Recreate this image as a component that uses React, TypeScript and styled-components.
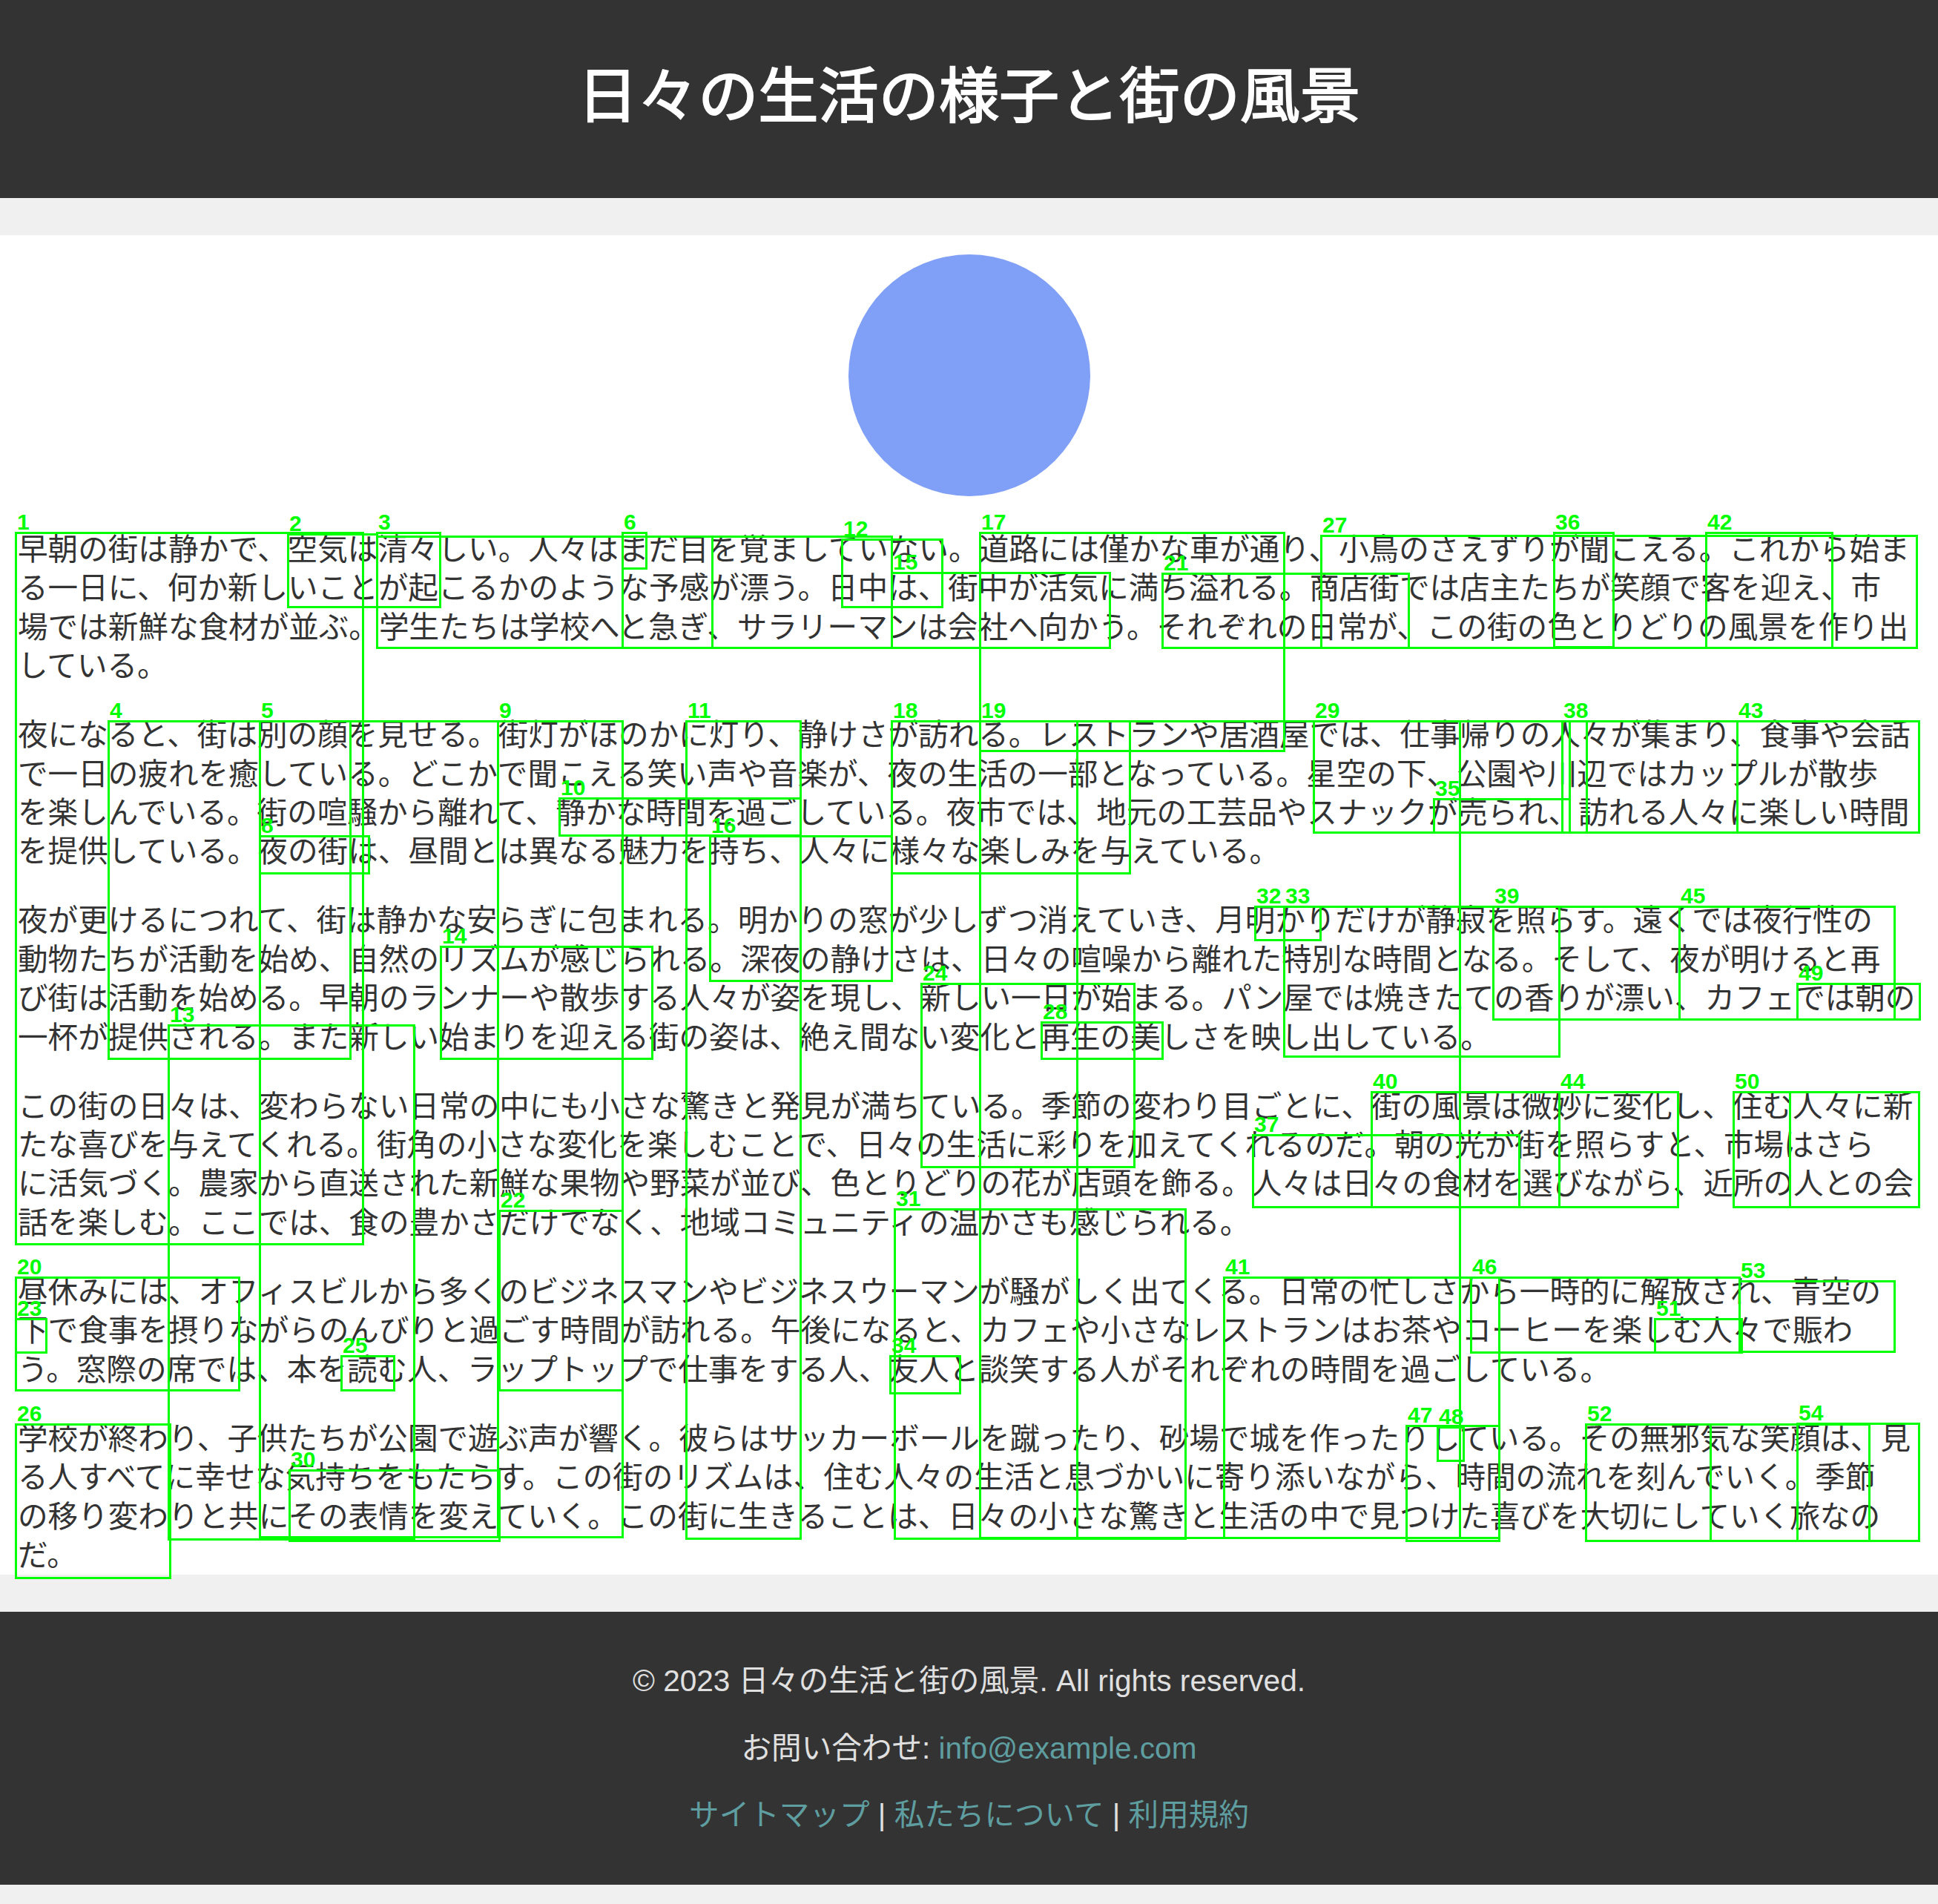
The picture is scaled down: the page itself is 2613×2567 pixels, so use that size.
import styled, { createGlobalStyle } from 'styled-components';

// Global page reset
const GlobalStyle = createGlobalStyle`
  html, body {
    margin: 0;
    padding: 0;
    background: #f0f0f0;
  }
  body {
    font-family: 'Liberation Sans', 'Noto Sans CJK JP', sans-serif;
    color: #333;
  }
`;

// Styled Components
const Page = styled.div`
  position: relative;
`;
const Header = styled.header`
  box-sizing: border-box;
  height: 267px;
  padding-bottom: 6px;
  display: flex;
  align-items: center;
  justify-content: center;
  background: #333;
`;
const Title = styled.h1`
  margin: 0;
  color: #fff;
  font-size: 81.2px;
  font-weight: 400;
  line-height: 1;
  -webkit-text-stroke: 2px #fff;
`;
const Main = styled.main`
  margin: 50px 0;
  padding: 26px 24px 0;
  background: #fff;
  font-size: 40.6px;
  line-height: 52.4px;
`;
const Sun = styled.div`
  width: 326px;
  height: 326px;
  margin: 0 auto 46px;
  border-radius: 50%;
  background: #809ff6;
`;
const Paragraph = styled.p`
  margin: 0 0 40.6px;
  white-space: nowrap;
  &:last-child {
    margin-bottom: 0;
  }
`;
const Footer = styled.footer`
  padding: 28px 0 27px;
  background: #333;
  color: #e0e0e0;
  text-align: center;
  font-size: 40.6px;
`;
const FooterLine = styled.p`
  margin: 41px 0;
  line-height: 49.5px;
`;
const FooterLink = styled.a`
  color: #5f9ea0;
  text-decoration: none;
`;
const Overlay = styled.div`
  position: absolute;
  top: 0;
  left: 0;
  width: 100%;
  height: 100%;
  pointer-events: none;
`;
const Box = styled.div`
  position: absolute;
  box-sizing: border-box;
  border: 3px solid #00ff00;
`;
const Label = styled.span`
  position: absolute;
  font-family: 'Liberation Sans', sans-serif;
  font-size: 30px;
  font-weight: 700;
  line-height: 30px;
  color: #00ff00;
  white-space: nowrap;
`;

const paragraphs: string[][] = [
  [
    '早朝の街は静かで、空気は清々しい。人々はまだ目を覚ましていない。道路には僅かな車が通り、小鳥のさえずりが聞こえる。これから始ま',
    'る一日に、何か新しいことが起こるかのような予感が漂う。日中は、街中が活気に満ち溢れる。商店街では店主たちが笑顔で客を迎え、市',
    '場では新鮮な食材が並ぶ。学生たちは学校へと急ぎ、サラリーマンは会社へ向かう。それぞれの日常が、この街の色とりどりの風景を作り出',
    'している。',
  ],
  [
    '夜になると、街は別の顔を見せる。街灯がほのかに灯り、静けさが訪れる。レストランや居酒屋では、仕事帰りの人々が集まり、食事や会話',
    'で一日の疲れを癒している。どこかで聞こえる笑い声や音楽が、夜の生活の一部となっている。星空の下、公園や川辺ではカップルが散歩',
    'を楽しんでいる。街の喧騒から離れて、静かな時間を過ごしている。夜市では、地元の工芸品やスナックが売られ、訪れる人々に楽しい時間',
    'を提供している。夜の街は、昼間とは異なる魅力を持ち、人々に様々な楽しみを与えている。',
  ],
  [
    '夜が更けるにつれて、街は静かな安らぎに包まれる。明かりの窓が少しずつ消えていき、月明かりだけが静寂を照らす。遠くでは夜行性の',
    '動物たちが活動を始め、自然のリズムが感じられる。深夜の静けさは、日々の喧噪から離れた特別な時間となる。そして、夜が明けると再',
    'び街は活動を始める。早朝のランナーや散歩する人々が姿を現し、新しい一日が始まる。パン屋では焼きたての香りが漂い、カフェでは朝の',
    '一杯が提供される。また新しい始まりを迎える街の姿は、絶え間ない変化と再生の美しさを映し出している。',
  ],
  [
    'この街の日々は、変わらない日常の中にも小さな驚きと発見が満ちている。季節の変わり目ごとに、街の風景は微妙に変化し、住む人々に新',
    'たな喜びを与えてくれる。街角の小さな変化を楽しむことで、日々の生活に彩りを加えてくれるのだ。朝の光が街を照らすと、市場はさら',
    'に活気づく。農家から直送された新鮮な果物や野菜が並び、色とりどりの花が店頭を飾る。人々は日々の食材を選びながら、近所の人との会',
    '話を楽しむ。ここでは、食の豊かさだけでなく、地域コミュニティの温かさも感じられる。',
  ],
  [
    '昼休みには、オフィスビルから多くのビジネスマンやビジネスウーマンが騒がしく出てくる。日常の忙しさから一時的に解放され、青空の',
    '下で食事を摂りながらのんびりと過ごす時間が訪れる。午後になると、カフェや小さなレストランはお茶やコーヒーを楽しむ人々で賑わ',
    'う。窓際の席では、本を読む人、ラップトップで仕事をする人、友人と談笑する人がそれぞれの時間を過ごしている。',
  ],
  [
    '学校が終わり、子供たちが公園で遊ぶ声が響く。彼らはサッカーボールを蹴ったり、砂場で城を作ったりしている。その無邪気な笑顔は、見',
    'る人すべてに幸せな気持ちをもたらす。この街のリズムは、住む人々の生活と息づかいに寄り添いながら、時間の流れを刻んでいく。季節',
    'の移り変わりと共にその表情を変えていく。この街に生きることは、日々の小さな驚きと生活の中で見つけた喜びを大切にしていく旅なの',
    'だ。',
  ],
];

// detection boxes drawn over the text: x1, y1, x2, y2, label
type Detection = [number, number, number, number, string];
const detections: Detection[] = [
  [21, 718, 489, 1677, '1'],
  [388, 720, 508, 818, '2'],
  [508, 718, 593, 818, '3'],
  [508, 723, 1202, 873, ''],
  [839, 718, 871, 766, '6'],
  [839, 723, 960, 873, ''],
  [1135, 727, 1270, 818, '12'],
  [1202, 772, 1496, 873, '15'],
  [1321, 718, 1731, 1012, '17'],
  [1567, 773, 1899, 873, '21'],
  [1781, 722, 2584, 873, '27'],
  [2095, 718, 2175, 872, '36'],
  [2300, 718, 2470, 873, '42'],

  [146, 972, 472, 1427, '4'],
  [350, 972, 671, 2072, '5'],
  [350, 1127, 497, 1177, '8'],
  [671, 972, 839, 2072, '9'],
  [754, 1076, 1079, 1126, '10'],
  [925, 972, 1079, 2074, '11'],
  [957, 1127, 1202, 1322, '16'],
  [1202, 972, 1523, 1177, '18'],
  [1321, 972, 1452, 2073, '19'],
  [1452, 972, 1968, 2073, ''],
  [1771, 972, 2116, 1122, '29'],
  [1933, 1077, 2116, 1122, '35'],
  [2106, 972, 2139, 1122, '38'],
  [2139, 972, 2342, 1122, ''],
  [2342, 972, 2587, 1122, '43'],

  [227, 1382, 558, 2075, '13'],
  [594, 1276, 879, 1427, '14'],
  [1242, 1326, 1529, 1573, '24'],
  [1404, 1378, 1567, 1427, '28'],
  [1692, 1222, 1731, 1267, '32'],
  [1731, 1222, 1780, 1267, '33'],
  [1731, 1222, 2102, 1424, ''],
  [2013, 1222, 2264, 1374, '39'],
  [2264, 1222, 2554, 1374, '45'],
  [2423, 1326, 2588, 1374, '49'],

  [1849, 1472, 2102, 1627, '40'],
  [1689, 1530, 2048, 1627, '37'],
  [2102, 1472, 2262, 1627, '44'],
  [2337, 1472, 2587, 1627, '50'],
  [2337, 1472, 2413, 1627, ''],

  [21, 1722, 322, 1874, '20'],
  [21, 1778, 62, 1823, '23'],
  [673, 1632, 839, 1874, '22'],
  [460, 1828, 531, 1874, '25'],
  [1206, 1630, 1598, 2074, '31'],
  [1200, 1828, 1294, 1878, '34'],
  [1650, 1722, 2021, 2073, '41'],
  [1983, 1722, 2345, 1823, '46'],
  [2231, 1778, 2348, 1823, '51'],
  [2345, 1727, 2554, 1822, '53'],

  [21, 1920, 229, 2127, '26'],
  [390, 1982, 673, 2077, '30'],
  [1896, 1922, 2021, 2077, '47'],
  [1938, 1924, 1973, 1969, '48'],
  [2138, 1920, 2306, 2077, '52'],
  [2306, 1920, 2520, 2077, ''],
  [2423, 1919, 2587, 2077, '54'],
];

const DetectionLayer = () => (
  <Overlay>
    {detections.map(([x1, y1, x2, y2, label], i) => (
      <div key={i}>
        <Box style={{ left: x1 - 1.5, top: y1 - 1.5, width: x2 - x1 + 3, height: y2 - y1 + 3 }} />
        {label && <Label style={{ left: x1 + 2, top: y1 - 29 }}>{label}</Label>}
      </div>
    ))}
  </Overlay>
);

export default function App() {
  return (
    <Page>
      <GlobalStyle />
      <Header>
        <Title>日々の生活の様子と街の風景</Title>
      </Header>
      <Main>
        <Sun />
        {paragraphs.map((lines, i) => (
          <Paragraph key={i}>
            {lines.map((line, j) => (
              <span key={j}>
                {line}
                {j < lines.length - 1 && <br />}
              </span>
            ))}
          </Paragraph>
        ))}
      </Main>
      <Footer>
        <FooterLine>© 2023 日々の生活と街の風景. All rights reserved.</FooterLine>
        <FooterLine>
          お問い合わせ: <FooterLink href="#">info@example.com</FooterLink>
        </FooterLine>
        <FooterLine>
          <FooterLink href="#">サイトマップ</FooterLink> | <FooterLink href="#">私たちについて</FooterLink> |{' '}
          <FooterLink href="#">利用規約</FooterLink>
        </FooterLine>
      </Footer>
      <DetectionLayer />
    </Page>
  );
}
